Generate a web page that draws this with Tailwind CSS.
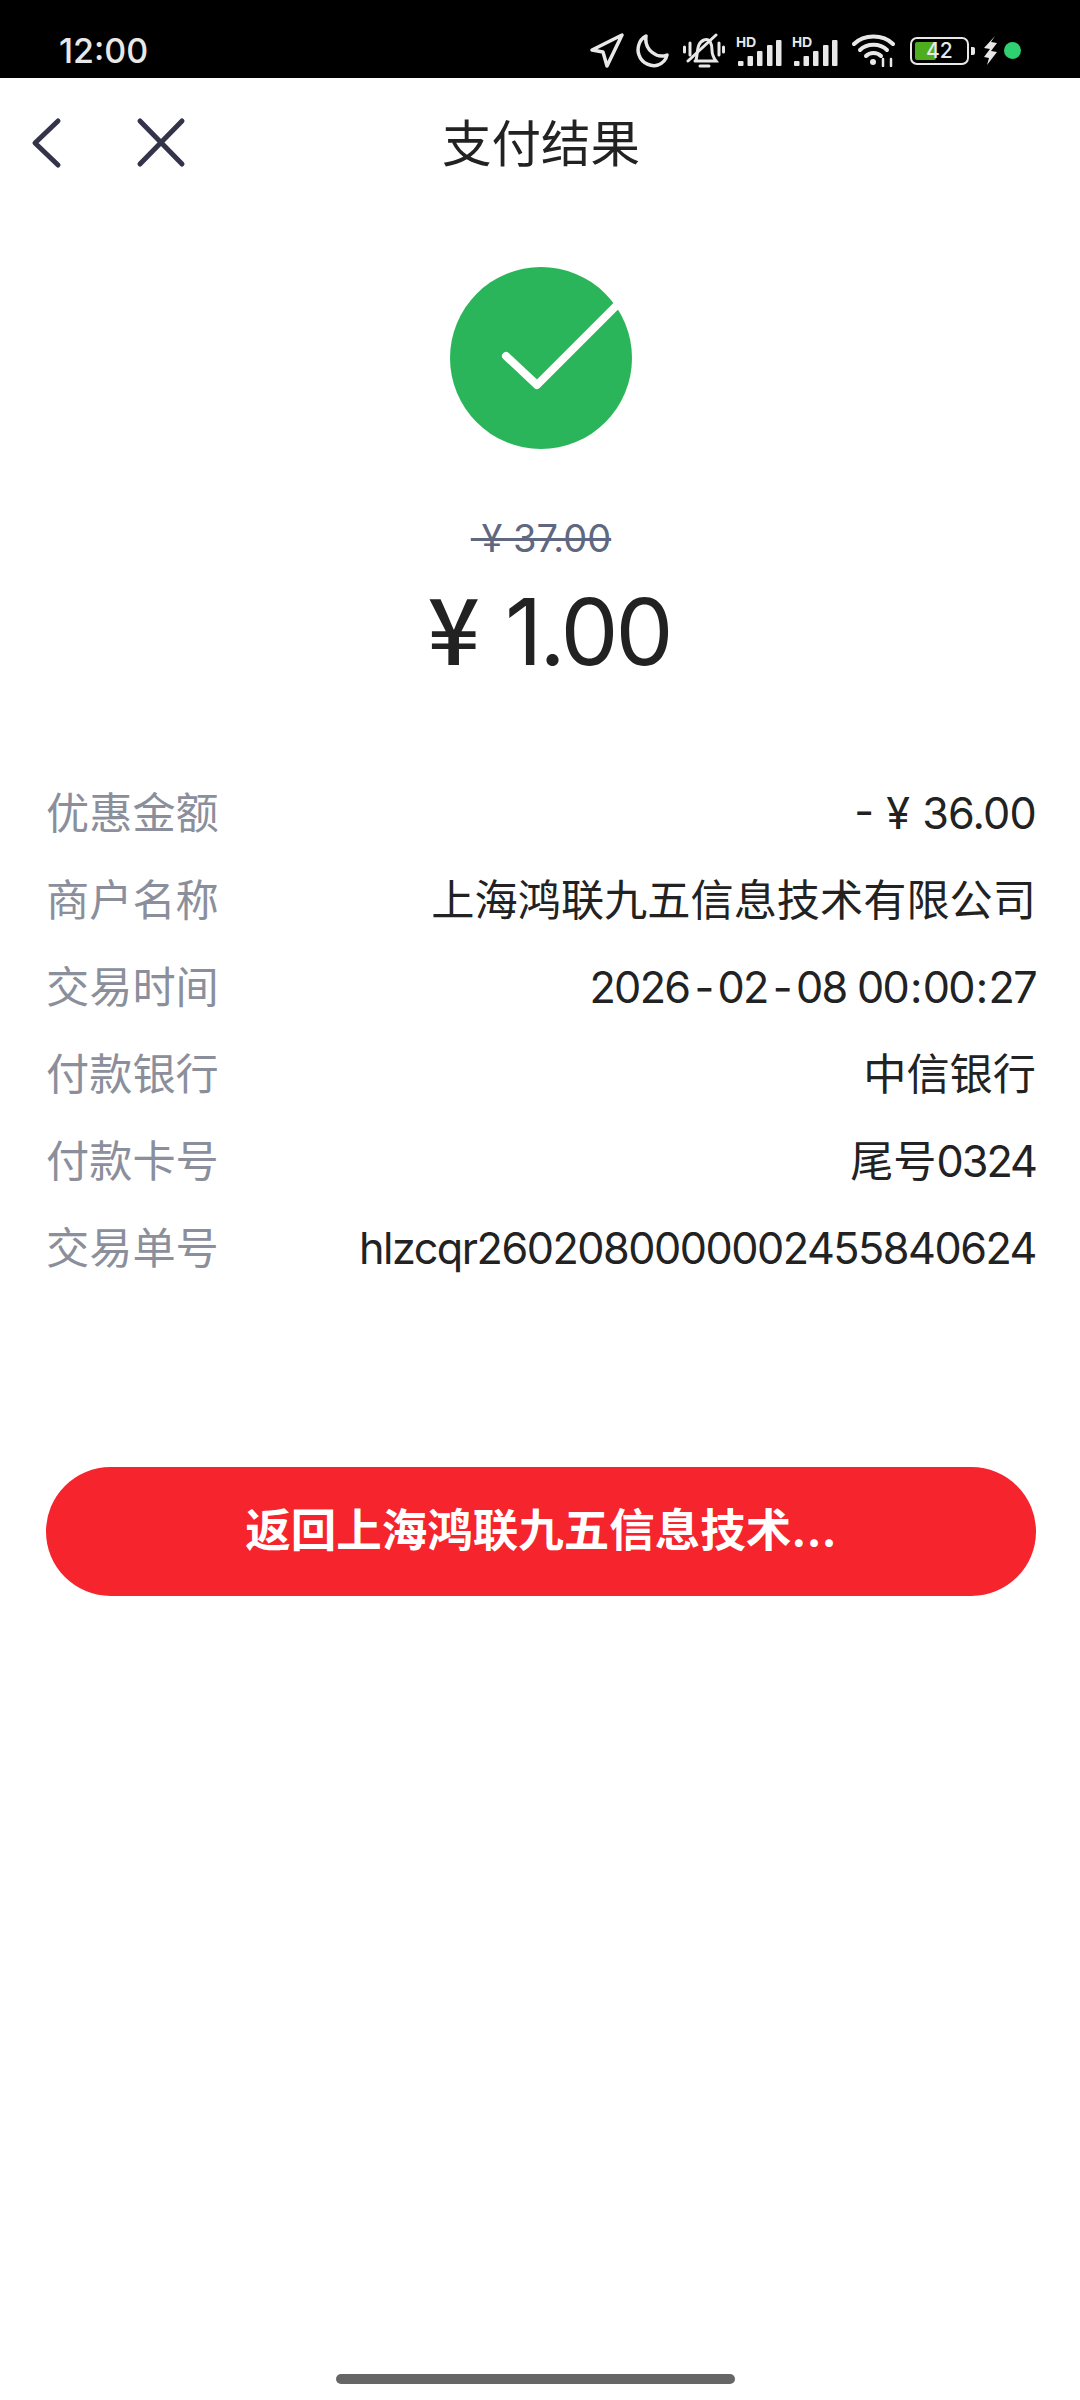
<!DOCTYPE html>
<html lang="zh">

<head>
    <meta charset="UTF-8">
    <meta name="viewport" content="width=device-width, initial-scale=1.0">
    <title>支付结果</title>
    <script src="https://cdn.jsdelivr.net/npm/@tailwindcss/browser@4"></script>
</head>

<body class="bg-white font-['Inter','Noto_Sans_CJK_SC',sans-serif]">
    <div class="w-[1080px] h-[2400px] flex flex-col overflow-hidden">

        <!-- status bar -->
        <div class="h-[78px] shrink-0 bg-black flex items-center justify-between pt-[23px] pl-[59px] pr-[59px] text-[#e8e8e8]">
            <span class="text-[34px] font-medium leading-none">12:00</span>
            <div class="flex items-center">
                <svg width="35" height="36" viewBox="0 0 35 36" fill="none" stroke="#e8e8e8" stroke-width="3.5" stroke-linejoin="round">
                    <path d="M2 17 L32 2 L17 33 L13 19 Z" />
                </svg>
                <svg class="ml-[11px]" width="33" height="34" viewBox="0 0 33 34" fill="none" stroke="#e8e8e8" stroke-width="3.5" stroke-linejoin="round">
                    <path d="M10 2 C2 6 1 16 3 21 C6 30 16 33 22 31 C27 29 30 26 31 21 C21 25 8 16 10 2 Z" />
                </svg>
                <svg class="ml-[14px]" width="42" height="36" viewBox="0 0 42 36" fill="none" stroke="#e8e8e8" stroke-width="3" stroke-linecap="round">
                    <path d="M1.5 14 V19 M7 10 V22 M36 10 V22 M40.5 14 V19" />
                    <path d="M13 27 C15 21 13 10 21 7 C27 5 29 11 29 17 C29 21 30 24 33 28 H12" />
                    <path d="M5 28 L33 2" />
                    <path d="M17 33 H26" />
                </svg>
                <div class="ml-[11px] relative w-[47px] h-[30px]">
                    <span class="absolute left-0 top-[-1px] text-[14px] font-bold leading-none font-['Liberation_Sans',sans-serif]">HD</span>
                    <svg class="absolute left-0 top-0" width="47" height="30" viewBox="0 0 47 30" fill="#e8e8e8">
                        <rect x="2" y="25" width="5.5" height="5" rx="1" />
                        <rect x="11.5" y="20" width="5.5" height="10" rx="1" />
                        <rect x="21" y="15" width="5.5" height="15" rx="1" />
                        <rect x="31" y="9" width="5.5" height="21" rx="1" />
                        <rect x="40" y="4" width="5.5" height="26" rx="1" />
                    </svg>
                </div>
                <div class="ml-[9px] relative w-[47px] h-[30px]">
                    <span class="absolute left-0 top-[-1px] text-[14px] font-bold leading-none font-['Liberation_Sans',sans-serif]">HD</span>
                    <svg class="absolute left-0 top-0" width="47" height="30" viewBox="0 0 47 30" fill="#e8e8e8">
                        <rect x="2" y="25" width="5.5" height="5" rx="1" />
                        <rect x="11.5" y="20" width="5.5" height="10" rx="1" />
                        <rect x="21" y="15" width="5.5" height="15" rx="1" />
                        <rect x="31" y="9" width="5.5" height="21" rx="1" />
                        <rect x="40" y="4" width="5.5" height="26" rx="1" />
                    </svg>
                </div>
                <svg class="ml-[13px]" width="43" height="33" viewBox="0 0 43 33" fill="none" stroke="#e8e8e8" stroke-width="4" stroke-linecap="round">
                    <path d="M2 10 C12 0 31 0 41 10" />
                    <path d="M8 16 C15 9 28 9 35 16" />
                    <path d="M14 22 C18 18 25 18 29 22" />
                    <circle cx="21" cy="28" r="3" fill="#e8e8e8" stroke="none" />
                    <path d="M31 25 V32 M39 25 V32" stroke-width="2.5" />
                </svg>
                <div class="ml-[15px] flex items-center">
                    <div class="relative w-[59px] h-[28px] border-[2.5px] border-[#e8e8e8] rounded-[7px]">
                        <div class="absolute left-[3px] top-[3px] bottom-[3px] w-[21px] bg-[#4ead1f] rounded-[2px]"></div>
                        <span class="absolute left-[14px] top-[0px] text-[21px] leading-[23px] font-medium">42</span>
                    </div>
                    <div class="ml-[2px] w-[4px] h-[8px] bg-[#e8e8e8] rounded-r-[2px]"></div>
                </div>
                <svg class="ml-[8px]" width="15" height="29" viewBox="0 0 15 29" fill="#e8e8e8">
                    <path d="M12 0 L1 12 L7 13 L1 21 L6 22 L4 29 L14 16 L8 15 L14 7 L8 6 Z" />
                </svg>
                <div class="ml-[6px] w-[17px] h-[17px] rounded-full bg-[#2fd06f]"></div>
            </div>
        </div>

        <!-- header -->
        <div class="relative h-[134px] shrink-0 flex items-center justify-center pl-[2px]">
            <svg class="absolute left-[30px] top-[39px]" width="34" height="52" viewBox="0 0 34 52" fill="none" stroke="#33334a" stroke-width="5" stroke-linecap="round" stroke-linejoin="round">
                <path d="M28 4 L5 26 L28 48" />
            </svg>
            <svg class="absolute left-[134px] top-[39px]" width="54" height="52" viewBox="0 0 54 52" fill="none" stroke="#33334a" stroke-width="5" stroke-linecap="round">
                <path d="M6 4 L48 47 M48 4 L6 47" />
            </svg>
            <span class="text-[49.5px] leading-none text-[#222222]">支付结果</span>
        </div>

        <!-- result -->
        <div class="flex flex-col items-center pl-[2px]">
            <svg class="mt-[55px]" width="182" height="182" viewBox="0 0 182 182">
                <circle cx="91" cy="91" r="91" fill="#2bb55b" />
                <path d="M56 89 L87 118 L170 35" fill="none" stroke="#fff" stroke-width="8" stroke-linecap="round" stroke-linejoin="round" />
            </svg>
            <span class="mt-[65px] text-[38px] leading-[48px] text-[#5f6880] line-through">&nbsp;¥ 37.00</span>
            <span class="mt-[7px] ml-[16px] flex items-baseline gap-[25px] text-[92px] leading-[112px] text-[#222222]">
                <span class="font-['Noto_Sans_CJK_SC',sans-serif] font-medium">¥</span>
                <span class="tracking-[-3px]">1.00</span>
            </span>
        </div>

        <!-- details -->
        <div class="mt-[100px] pl-[46px] pr-[44px] flex flex-col gap-[37px] text-[43.2px] leading-[50px]">
            <div class="flex justify-between"><span class="text-[#8b8f9c]">优惠金额</span><span class="text-[#222222]">- ¥ <span class="tracking-[-0.8px]">36.00</span></span></div>
            <div class="flex justify-between"><span class="text-[#8b8f9c]">商户名称</span><span class="text-[#222222]">上海鸿联九五信息技术有限公司</span></div>
            <div class="flex justify-between"><span class="text-[#8b8f9c]">交易时间</span><span class="text-[#222222] tracking-[-1.7px]">2026<span class="mx-[5px]">-</span>02<span class="mx-[5px]">-</span>08 00<span class="mx-[2px]">:</span>00<span class="mx-[2px]">:</span>27</span></div>
            <div class="flex justify-between"><span class="text-[#8b8f9c]">付款银行</span><span class="text-[#222222]">中信银行</span></div>
            <div class="flex justify-between"><span class="text-[#8b8f9c]">付款卡号</span><span class="text-[#222222]">尾号<span class="tracking-[-2px]">0324</span></span></div>
            <div class="flex justify-between"><span class="text-[#8b8f9c]">交易单号</span><span class="text-[#222222] tracking-[-1.5px]">hlzcqr2602080000002455840624</span></div>
        </div>

        <!-- button -->
        <div class="mt-[194px] ml-[46px] mr-[44px] h-[129px] rounded-full bg-[#f5242d] flex items-center justify-center text-white text-[45.5px] font-bold">返回上海鸿联九五信息技术...</div>

        <!-- home indicator -->
        <div class="mt-auto mb-[16px] ml-[336px] w-[399px] h-[10px] rounded-full bg-[#666666]"></div>
    </div>
</body>

</html>
